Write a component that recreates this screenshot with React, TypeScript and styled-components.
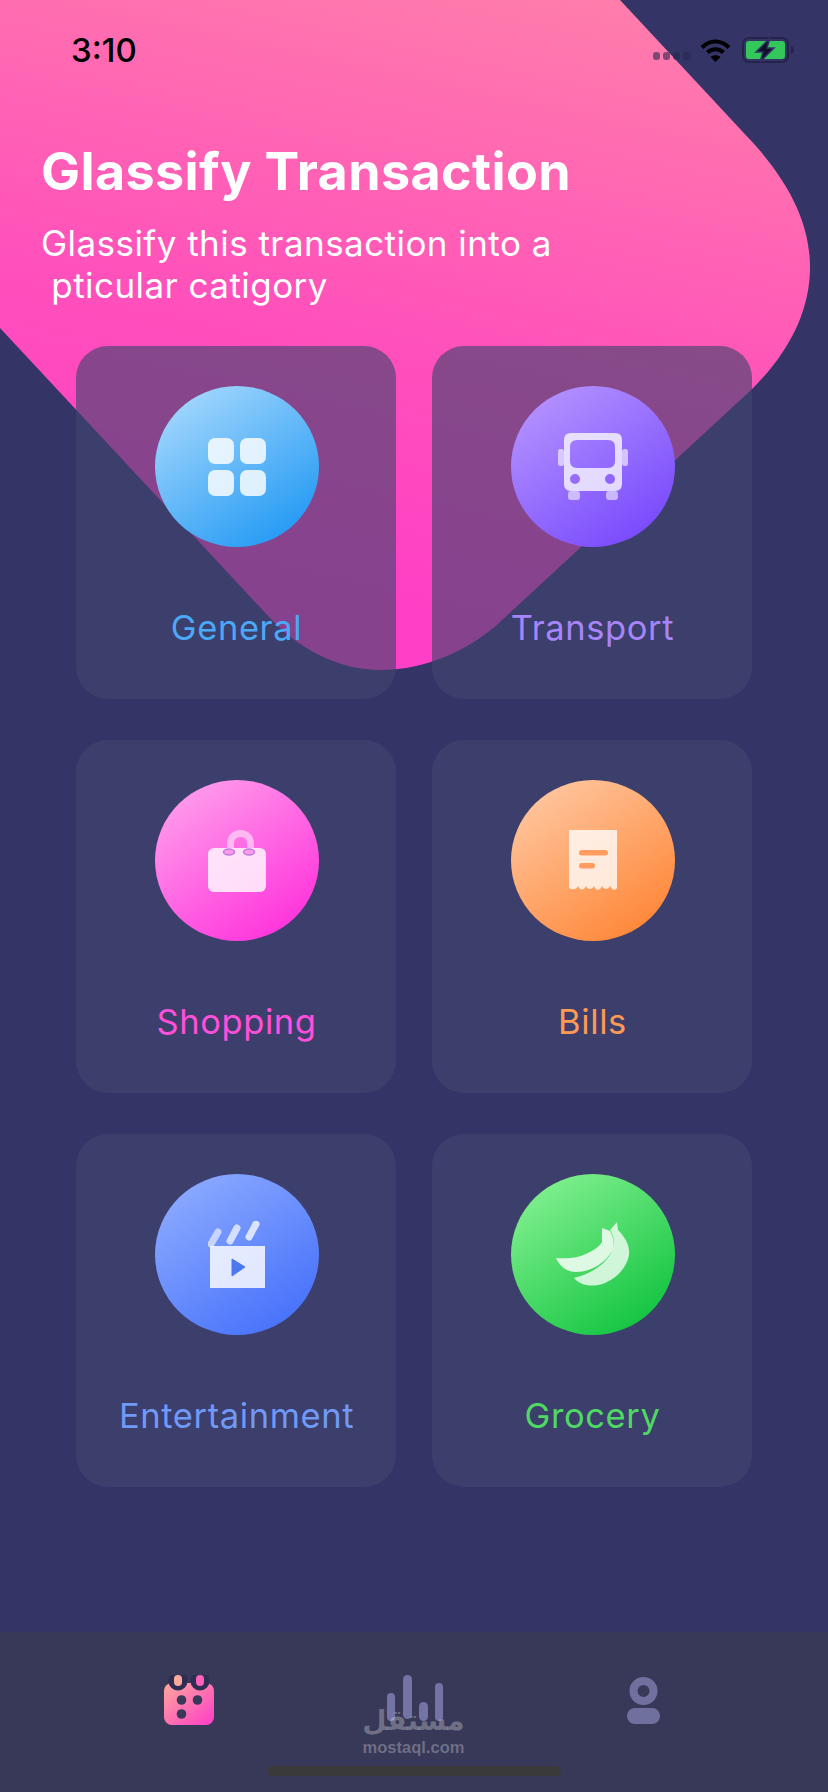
import React from 'react';
import styled, { createGlobalStyle } from 'styled-components';

const GlobalStyle = createGlobalStyle`
  html, body {
    margin: 0;
    padding: 0;
    background: #343467;
  }
`;

const Page = styled.div`
  position: relative;
  display: flex;
  flex-direction: column;
  width: 828px;
  height: 1792px;
  overflow: hidden;
  background: #343467;
  font-family: Inter, 'Liberation Sans', sans-serif;
`;

const Blob = styled.svg`
  position: absolute;
  top: 0;
  left: 0;
`;

const StatusBar = styled.div`
  position: relative;
  display: flex;
  align-items: center;
  justify-content: space-between;
  height: 100px;
  padding: 0 34px 0 71px;
  box-sizing: border-box;
`;

const Time = styled.span`
  font-size: 33px;
  font-weight: 500;
  color: #000;
`;

const StatusIcons = styled.div`
  display: flex;
  align-items: center;
`;

const SignalDots = styled.div`
  display: flex;
  gap: 3px;
  margin: 12px 10px 0 0;
`;

const SignalDot = styled.i`
  display: block;
  width: 7px;
  height: 8px;
  border-radius: 3px;
  background: rgba(40, 40, 80, 0.6);
`;

const Header = styled.header`
  position: relative;
  padding: 0 0 0 41px;
  color: #fff;
`;

const Title = styled.h1`
  margin: 42px 0 0;
  font-size: 52px;
  line-height: 60px;
  font-weight: 700;
  letter-spacing: 0.4px;
`;

const Subtitle = styled.p`
  margin: 20px 0 0;
  font-size: 35px;
  line-height: 42px;
  font-weight: 400;
  letter-spacing: 0.45px;
  white-space: pre;
`;

const CardGrid = styled.section`
  position: absolute;
  top: 346px;
  left: 76px;
  display: grid;
  grid-template-columns: 320px 320px;
  grid-auto-rows: 353px;
  gap: 41px 36px;
`;

const Card = styled.div`
  display: flex;
  flex-direction: column;
  align-items: center;
  padding: 40px 0 0 1px;
  box-sizing: border-box;
  border-radius: 32px;
  background: rgba(65, 68, 110, 0.63);
`;

const IconCircle = styled.div<{ $from: string; $to: string }>`
  display: flex;
  align-items: center;
  justify-content: center;
  width: 164px;
  height: 161px;
  border-radius: 50%;
  background: linear-gradient(145deg, ${({ $from }) => $from} 8%, ${({ $to }) => $to} 85%);
`;

const CardLabel = styled.span<{ $color: string }>`
  margin-top: 61px;
  font-size: 34.5px;
  line-height: 40px;
  letter-spacing: 0.6px;
  color: ${({ $color }) => $color};
`;

const TabBar = styled.nav`
  position: relative;
  margin-top: auto;
  height: 160px;
  padding-top: 43px;
  box-sizing: border-box;
  background: #383858;
`;

const Tabs = styled.div`
  display: grid;
  grid-template-columns: 223px 240px 33px;
  align-items: start;
  padding-left: 164px;
  height: 50px;
`;

const HomeIndicator = styled.div`
  width: 294px;
  height: 10px;
  margin: 41px auto 0;
  border-radius: 5px;
  background: #3a3a3a;
`;

const Watermark = styled.div`
  position: absolute;
  top: 70px;
  left: 354px;
  width: 119px;
  text-align: center;
  color: rgba(255, 255, 255, 0.28);
`;

const WatermarkArabic = styled.div`
  font-family: 'DejaVu Sans', sans-serif;
  font-size: 28px;
  line-height: 37px;
  font-weight: 700;
`;

const WatermarkLatin = styled.div`
  font-family: 'Liberation Sans', sans-serif;
  font-size: 16.5px;
  line-height: 16px;
  font-weight: 700;
  white-space: nowrap;
`;

const white = 'rgba(255,255,255,0.82)';

const GridIcon = () => (
  <svg width="58" height="58" viewBox="0 0 58 58">
    <rect x="0" y="0" width="26" height="26" rx="7" fill={white} />
    <rect x="32" y="0" width="26" height="26" rx="7" fill={white} />
    <rect x="0" y="32" width="26" height="26" rx="7" fill={white} />
    <rect x="32" y="32" width="26" height="26" rx="7" fill={white} />
  </svg>
);

const BusIcon = () => (
  <svg width="72" height="70" viewBox="0 0 72 70">
    <rect x="1" y="17" width="6" height="17" rx="2.5" fill="rgba(255,255,255,0.6)" />
    <rect x="65" y="17" width="6" height="17" rx="2.5" fill="rgba(255,255,255,0.6)" />
    <rect x="11" y="59" width="12" height="9" rx="3" fill="rgba(255,255,255,0.55)" />
    <rect x="49" y="59" width="12" height="9" rx="3" fill="rgba(255,255,255,0.55)" />
    <path
      fillRule="evenodd"
      fill="rgba(255,255,255,0.76)"
      d="M14 1H58Q65 1 65 8V52Q65 59 58 59H14Q7 59 7 52V8Q7 1 14 1ZM20 8Q13 8 13 15V29Q13 36 20 36H51Q58 36 58 29V15Q58 8 51 8ZM18 42A5 5 0 1 0 18 52A5 5 0 1 0 18 42ZM53 42A5 5 0 1 0 53 52A5 5 0 1 0 53 42Z"
    />
  </svg>
);

const BagIcon = () => (
  <svg width="58" height="62" viewBox="0 0 58 62">
    <path d="M22.5 24V14C22.5 0 42.5 0 42.5 14V24" fill="none" stroke="rgba(255,255,255,0.5)" strokeWidth="7" />
    <rect x="0" y="18" width="58" height="44" rx="6" fill="rgba(255,255,255,0.8)" />
    <ellipse cx="21" cy="22" rx="5.5" ry="3" fill="#f99be8" stroke="#c07ae0" strokeWidth="1.5" />
    <ellipse cx="41" cy="22" rx="5.5" ry="3" fill="#f99be8" stroke="#c07ae0" strokeWidth="1.5" />
  </svg>
);

const ReceiptIcon = () => (
  <svg width="48" height="62" viewBox="0 0 48 62">
    <path
      fill="rgba(255,255,255,0.78)"
      d="M0 0H48V58C46 61 43 60 41 56C39 60 35 60 33 56C31 61 27 61 25 56C23 60 19 60 17 56C15 61 11 60 9 56C7 60 3 60 0 58Z"
    />
    <rect x="10" y="20" width="29" height="5.5" rx="2.7" fill="#ff9c62" />
    <rect x="10" y="33" width="16" height="5.5" rx="2.7" fill="#ff9c62" />
  </svg>
);

const ClapperIcon = () => (
  <svg width="58" height="67" viewBox="0 0 58 67">
    <path d="M10 11L3 23" stroke="rgba(255,255,255,0.6)" strokeWidth="7" strokeLinecap="round" />
    <path d="M29 7L22 20" stroke="rgba(255,255,255,0.7)" strokeWidth="7" strokeLinecap="round" />
    <path d="M48 3L41 16" stroke="rgba(255,255,255,0.75)" strokeWidth="7" strokeLinecap="round" />
    <rect x="2" y="25" width="55" height="42" fill="rgba(255,255,255,0.82)" />
    <path d="M24 38L37 46L24 55Z" fill="#4d78ee" stroke="#4d78ee" strokeWidth="1" strokeLinejoin="round" />
  </svg>
);

const BananaIcon = () => (
  <svg width="74" height="65" viewBox="0 0 74 65">
    <path
      fill="rgba(255,255,255,0.76)"
      d="M61 0L62 8C70 16 74 24 73 33C71 46 58 60 42 63C32 65 23 62 18 56C26 54 34 51 41 46C50 40 57 31 58 21C58 16 56 11 54 8Z"
    />
    <path
      fill="rgba(255,255,255,0.82)"
      d="M0 36C12 37 22 36 32 31C38 28 43 25 46 20L46 6L54 9C58 16 59 24 56 29C50 40 36 50 20 50C10 50 3 43 0 36Z"
    />
  </svg>
);

const WifiIcon = () => (
  <svg width="31" height="24" viewBox="0 0 31 24">
    <path d="M2 9.5C10 1.5 21 1.5 29 9.5" fill="none" stroke="#000" strokeWidth="4" />
    <path d="M7.5 14.5C12 10.2 19 10.2 23.5 14.5" fill="none" stroke="#000" strokeWidth="4" />
    <path d="M15.5 24L10.5 19C13.5 16.7 17.5 16.7 20.5 19Z" fill="#000" />
  </svg>
);

const BatteryIcon = () => (
  <svg width="52" height="26" viewBox="0 0 52 26" style={{ marginLeft: 11 }}>
    <rect x="1" y="1" width="45" height="24" rx="6" fill="none" stroke="#24244a" strokeWidth="2" />
    <rect x="4" y="4" width="39" height="18" rx="3" fill="#34c759" />
    <path d="M49 9C51 10 52 11.5 52 13C52 14.5 51 16 49 17Z" fill="#24244a" />
    <path d="M28 1L14 15H21L18 25L32 11H25Z" fill="#10102a" stroke="#34346a" strokeWidth="1.5" />
  </svg>
);

const CalendarTab = () => (
  <svg width="50" height="50" viewBox="0 0 50 50">
    <defs>
      <linearGradient id="calendarFill" x1="0" y1="0" x2="1" y2="1">
        <stop offset="0" stopColor="#ffa99a" />
        <stop offset="1" stopColor="#ff3cc8" />
      </linearGradient>
    </defs>
    <rect x="0" y="8" width="50" height="42" rx="8" fill="url(#calendarFill)" />
    <circle cx="14" cy="6" r="9.5" fill="#2e2e54" />
    <circle cx="36" cy="6" r="9.5" fill="#2e2e54" />
    <rect x="10" y="0" width="8" height="11" rx="4" fill="#ffa89c" />
    <rect x="32" y="0" width="8" height="11" rx="4" fill="#ff62b8" />
    <circle cx="17.5" cy="25" r="4.8" fill="#383858" />
    <circle cx="33.5" cy="25" r="4.8" fill="#383858" />
    <circle cx="17.5" cy="39" r="4.8" fill="#383858" />
  </svg>
);

const ChartTab = () => (
  <svg width="56" height="46" viewBox="0 0 56 46">
    <rect x="0" y="18" width="8" height="28" rx="4" fill="#7373a5" />
    <rect x="16" y="0" width="9" height="44" rx="4.5" fill="#7373a5" />
    <rect x="32" y="27" width="9" height="19" rx="4.5" fill="#7373a5" />
    <rect x="48" y="8" width="8" height="38" rx="4" fill="#7373a5" />
  </svg>
);

const ProfileTab = () => (
  <svg width="33" height="49" viewBox="0 0 33 49" style={{ marginTop: 2 }}>
    <circle cx="16.5" cy="14" r="10" fill="none" stroke="#70709f" strokeWidth="8" />
    <rect x="0" y="31" width="33" height="16" rx="8" fill="#70709f" />
  </svg>
);

const categories = [
  { label: 'General', color: '#4ba8f6', from: '#a5d8fd', to: '#2a9df4', icon: <GridIcon /> },
  { label: 'Transport', color: '#a685f9', from: '#b594ff', to: '#7b4dfd', icon: <BusIcon /> },
  { label: 'Shopping', color: '#ff4fdb', from: '#ff9fec', to: '#ff38dc', icon: <BagIcon /> },
  { label: 'Bills', color: '#ff9a55', from: '#ffc7a1', to: '#ff8a3d', icon: <ReceiptIcon /> },
  { label: 'Entertainment', color: '#7199f7', from: '#8dabff', to: '#4a74fb', icon: <ClapperIcon /> },
  { label: 'Grocery', color: '#4fd964', from: '#84f191', to: '#18c644', icon: <BananaIcon /> },
];

const App = () => (
  <Page>
    <GlobalStyle />

    <Blob width="828" height="700" viewBox="0 0 828 700">
      <defs>
        <linearGradient id="blobFill" gradientUnits="userSpaceOnUse" x1="560" y1="-20" x2="420" y2="620">
          <stop offset="0" stopColor="#ff7eab" />
          <stop offset="0.6" stopColor="#ff50bb" />
          <stop offset="1" stopColor="#ff3fc6" />
        </linearGradient>
      </defs>
      <path
        fill="url(#blobFill)"
        d="M0 0H620L755 145C795 190 810 230 810 267C810 310 790 352 750 391L500 622C470 650 425 670 381 670C340 670 300 650 270 618L0 328Z"
      />
    </Blob>

    <StatusBar>
      <Time>3:10</Time>
      <StatusIcons>
        <SignalDots>
          <SignalDot />
          <SignalDot />
          <SignalDot />
          <SignalDot />
        </SignalDots>
        <WifiIcon />
        <BatteryIcon />
      </StatusIcons>
    </StatusBar>

    <Header>
      <Title>Glassify Transaction</Title>
      <Subtitle>{'Glassify this transaction into a\n pticular catigory'}</Subtitle>
    </Header>

    <CardGrid>
      {categories.map((category) => (
        <Card key={category.label}>
          <IconCircle $from={category.from} $to={category.to}>
            {category.icon}
          </IconCircle>
          <CardLabel $color={category.color}>{category.label}</CardLabel>
        </Card>
      ))}
    </CardGrid>

    <TabBar>
      <Tabs>
        <CalendarTab />
        <ChartTab />
        <ProfileTab />
      </Tabs>
      <HomeIndicator />
      <Watermark>
        <WatermarkArabic>مستقل</WatermarkArabic>
        <WatermarkLatin>mostaql.com</WatermarkLatin>
      </Watermark>
    </TabBar>
  </Page>
);

export default App;
